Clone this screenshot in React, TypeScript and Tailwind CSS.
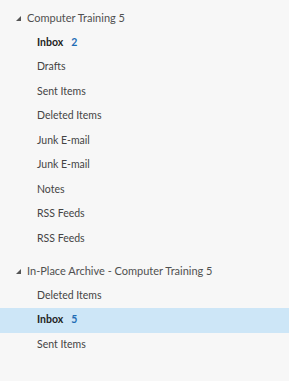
import React from "react";

type Folder = { name: string; count?: number; selected?: boolean };
type Group = { title: string; folders: Folder[] };

const GROUPS: Group[] = [
  {
    title: "Computer Training 5",
    folders: [
      { name: "Inbox", count: 2 },
      { name: "Drafts" },
      { name: "Sent Items" },
      { name: "Deleted Items" },
      { name: "Junk E-mail" },
      { name: "Junk E-mail" },
      { name: "Notes" },
      { name: "RSS Feeds" },
      { name: "RSS Feeds" },
    ],
  },
  {
    title: "In-Place Archive - Computer Training 5",
    folders: [
      { name: "Deleted Items" },
      { name: "Inbox", count: 5, selected: true },
      { name: "Sent Items" },
    ],
  },
];

function Arrow() {
  return (
    <svg width="5" height="5" viewBox="0 0 5 5" className="mr-[6px] mt-[1px]">
      <polygon points="5,0 5,5 0,5" fill="#555" />
    </svg>
  );
}

export default function App() {
  return (
    <div className="h-[381px] w-[289px] bg-[#f7f7f7] pt-[6px] font-['Lato',sans-serif] text-[#444]">
      <div className="flex flex-col gap-[8px]">
        {GROUPS.map((g, gi) => (
          <div key={gi}>
            <div className="flex h-[24.5px] items-center pl-[16px] text-[11px] text-[#505050]">
              <Arrow />
              <span>{g.title}</span>
            </div>
            {g.folders.map((f, i) => (
              <div
                key={i}
                className={
                  "flex h-[24.5px] items-center pl-[37px] text-[10.5px] " +
                  (f.selected ? "bg-[#cde6f7]" : "")
                }
              >
                {f.count !== undefined ? (
                  <>
                    <span className="font-bold text-[#222]">{f.name}</span>
                    <span className="ml-[8px] font-bold text-[#1f6db5]">{f.count}</span>
                  </>
                ) : (
                  <span>{f.name}</span>
                )}
              </div>
            ))}
          </div>
        ))}
      </div>
    </div>
  );
}
